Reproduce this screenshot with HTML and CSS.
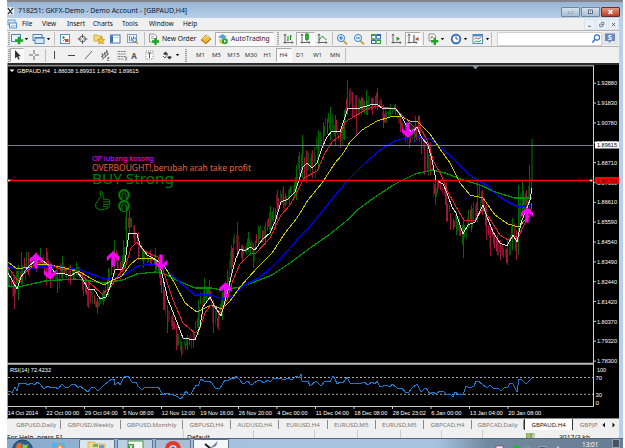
FILE: index.html
```
<!DOCTYPE html>
<html lang="en">
<head>
    <meta charset="UTF-8">
    <title>718251: GKFX-Demo - Demo Account - [GBPAUD,H4]</title>
    <link rel="stylesheet" href="styles.css">
</head>
<body>
    <svg class="defs" width="0" height="0">
        <symbol id="caret" viewBox="0 0 5 12"><path d="M.8 5h3.4L2.5 7.2z" fill="#111"/></symbol>
        <symbol id="plus" viewBox="0 0 8 8"><path d="M2.7 0h2.6v2.7H8v2.6H5.3V8H2.7V5.3H0V2.7h2.7z" fill="#19a51f"/></symbol>
        <symbol id="axes" viewBox="0 0 12 12"><path d="M3 1v9.500M1.500 9.500h9.500M1.800 2.500L3 1l1.200 1.500M9.800 8.300L11 9.500l-1.200 1.200" fill="none" stroke="#555" stroke-width=".9"/></symbol>
    </svg>

    <div class="window">
        <div class="titlebar">
            <svg class="app-icon" viewBox="0 0 8 9"><rect width="8" height="9" fill="#eef2f5"/><path d="M1 1l5 7M7 1L1 8" stroke="#222" stroke-width="1.300"/></svg>
            <span class="title">718251: GKFX-Demo - Demo Account - [GBPAUD,H4]</span>
            <div class="win-buttons">
                <span class="wb"><svg viewBox="0 0 18 10"><rect x="6" y="5" width="6" height="2" fill="#fff" stroke="#56657a" stroke-width=".6"/></svg></span>
                <span class="wb"><svg viewBox="0 0 18 10"><rect x="6.500" y="2.500" width="5" height="4.500" fill="#fff" stroke="#3d4b60"/><rect x="8.300" y="4" width="1.500" height="1.500" fill="#3d4b60"/></svg></span>
                <span class="wb close"><svg viewBox="0 0 18 10"><path d="M6.500 2.500l5 5M11.500 2.500l-5 5" stroke="#fff" stroke-width="1.700"/></svg></span>
            </div>
        </div>

        <div class="menubar">
            <svg class="menu-icon" viewBox="0 0 10 10"><rect x="1" y="1" width="7" height="5" fill="#d7e8fa" stroke="#6c9bd0"/><rect x="2.500" y="4" width="7" height="5" fill="#eef6ff" stroke="#5d90cb"/><path d="M4 8l1.500-2L7 7.500 8.500 6" stroke="#4c86c7" fill="none" stroke-width=".7"/></svg>
            <span class="m-file">File</span>
            <span class="m-view">View</span>
            <span class="m-insert">Insert</span>
            <span class="m-charts">Charts</span>
            <span class="m-tools">Tools</span>
            <span class="m-window">Window</span>
            <span class="m-help">Help</span>
            <div class="mdi-buttons">
                <svg viewBox="0 0 9 10"><path d="M3 7h3" stroke="#555"/></svg>
                <svg viewBox="0 0 9 10"><path d="M4 2.500h3v3H6M2.500 4.500h3v3h-3z" fill="none" stroke="#555" stroke-width=".8"/></svg>
                <svg viewBox="0 0 9 10"><path d="M2.700 3.300l3.600 3.600M6.300 3.300L2.700 6.900" stroke="#555"/></svg>
            </div>
        </div>

        <div class="toolbar standard">
            <i class="grip s3"></i>
            <svg class="s14" viewBox="0 0 14 12"><rect x="1.500" y="1.500" width="9" height="7" fill="#e9f3fc" stroke="#4d86bd"/><use href="#plus" x="5" y="3.500" width="8" height="8"/></svg>
            <svg class="s5"><use href="#caret"/></svg>
            <svg class="s15 ml2" viewBox="0 0 15 12"><rect x="2" y="1.500" width="9" height="6" fill="#e9f3fc" stroke="#4d86bd"/><rect x="4" y="4.500" width="9" height="6" fill="#d5e7f8" stroke="#4d86bd"/><path d="M4 5h9" stroke="#3573b3"/></svg>
            <svg class="s5"><use href="#caret"/></svg>
            <i class="sep s6"></i>
            <svg class="s16" viewBox="0 0 16 12"><rect x="3.500" y="1.500" width="9" height="9" fill="#fff" stroke="#5b92c9"/><path d="M5 4.500L6.500 3 8 4.500 6.500 6z" fill="#16a316"/><path d="M8 6h3.500v3H8z" fill="#d8452b"/><path d="M8 6L6 8" stroke="#cf6a3a"/></svg>
            <svg class="s19" viewBox="0 0 19 12"><circle cx="9.500" cy="6" r="3" fill="none" stroke="#555" stroke-width=".9"/><path d="M9.500 1v4M9.500 7v4M4.500 6h4M10.500 6h4" stroke="#555" stroke-width=".9"/></svg>
            <svg class="s14" viewBox="0 0 14 12"><path d="M2 2h3l1 1h4v5H2z" fill="#f6dc7c" stroke="#c89c2d" stroke-width=".8"/><path d="M9 4l1.200 2.200 2.500.3-1.800 1.800.4 2.600L9 9.700l-2.300 1.200.4-2.600-1.800-1.800 2.500-.3z" fill="#f3c633" stroke="#b1831b" stroke-width=".6"/></svg>
            <svg class="s19" viewBox="0 0 19 12"><rect x="4.500" y="2" width="9.500" height="8" fill="#fff" stroke="#4477b8"/><rect x="5" y="2.500" width="2" height="7" fill="#3a6cb6"/><path d="M8 4.500h5" stroke="#b9d0ea"/></svg>
            <svg class="s16" viewBox="0 0 16 12"><rect x="2.500" y="1.500" width="9" height="8" fill="#eaf3fc" stroke="#7ba1c9"/><path d="M4.500 3v5M6.500 4v4M8.500 3v4" stroke="#6389b4"/><circle cx="9.500" cy="7" r="2" fill="#dcecf8" stroke="#4b7db4"/><path d="M11 8.500l2 2.300" stroke="#c89735" stroke-width="1.400"/></svg>
            <i class="sep s7"></i>
            <svg class="s11" viewBox="0 0 11 12"><path d="M1.500 1h5L8.500 3v6h-7z" fill="#fff" stroke="#777" stroke-width=".8"/><path d="M3 3.500h3M3 5.500h4" stroke="#888" stroke-width=".7"/><use href="#plus" x="4" y="5" width="7" height="7"/></svg>
            <span class="new-order">New Order</span>
            <svg class="s18" viewBox="0 0 18 12"><path d="M4 7l5-5 5 4-5 5z" fill="#f1bd33" stroke="#a8761a" stroke-width=".8"/><path d="M4 7l5 2.500L14 6" fill="none" stroke="#a8761a" stroke-width=".7"/><path d="M6.500 5.500l3-2.500 2 1.500" stroke="#fff0ae" fill="none"/></svg>
            <div class="pressed auto">
                <svg class="s11" viewBox="0 0 11 12"><path d="M1 4l4.500-3L10 4 5.500 6z" fill="#5aa0dc"/><path d="M1.500 5.500l4 1.500 4-1.500-1.500 5h-5z" fill="#edc449"/><circle cx="7.800" cy="8.300" r="3" fill="#27a62f"/><path d="M7 6.800l2.400 1.500L7 9.800z" fill="#fff"/></svg>
                <span>AutoTrading</span>
            </div>
            <i class="grip s7"></i>
            <svg class="s15" viewBox="0 0 15 12"><use href="#axes" x="1" width="12" height="12"/><path d="M7 3v5M7 7h-1M9.500 2v5M9.500 3h1.300" stroke="#15921b"/></svg>
            <div class="pressed s19"><svg class="s15" viewBox="0 0 15 12"><use href="#axes" x="1" width="12" height="12"/><path d="M9 0v8.500" stroke="#15921b"/><rect x="7.500" y="1" width="3" height="5.500" fill="#1db526" stroke="#0d7d14" stroke-width=".6"/></svg></div>
            <svg class="s15" viewBox="0 0 15 12"><use href="#axes" x="1" width="12" height="12"/><path d="M4 7.500q3-6 5-3l2.500 2.500" stroke="#15921b" fill="none"/></svg>
            <i class="sep s4"></i>
            <svg class="s16" viewBox="0 0 16 12"><path d="M9 7.500l4 3.800" stroke="#d0a23e" stroke-width="2"/><circle cx="7" cy="5" r="3.600" fill="#d9ecfa" stroke="#4588c7"/><path d="M5.200 5h3.600M7 3.200v3.600" stroke="#256fb4"/></svg>
            <svg class="s18" viewBox="0 0 18 12"><path d="M10 7.500l4 3.800" stroke="#d0a23e" stroke-width="2"/><circle cx="8" cy="5" r="3.600" fill="#d9ecfa" stroke="#4588c7"/><path d="M6.200 5h3.600" stroke="#256fb4"/></svg>
            <svg class="s16" viewBox="0 0 16 12"><path d="M3 1h4.800v4.700H3zM8.200 6.200H13V11H8.200z" fill="#2fa332"/><path d="M8.200 1H13v4.700H8.200zM3 6.200h4.800V11H3z" fill="#2e62bd"/><path d="M4 3h3v2H4zM9 3h3v2H9zM4 8h3v2H4zM9 8h3v2H9z" fill="#eef5ff"/></svg>
            <i class="sep s5"></i>
            <svg class="s16" viewBox="0 0 16 12"><use href="#axes" x="1" width="12" height="12"/><path d="M7.500 3.500v4.600L11 5.800z" fill="#17a11e"/></svg>
            <div class="pressed s16"><svg class="s15" viewBox="0 0 15 12"><use href="#axes" x="0" width="12" height="12"/><path d="M8 2v7" stroke="#444"/><path d="M12.500 4v4L9 6z" fill="#cf3c20"/></svg></div>
            <i class="sep s5"></i>
            <svg class="s14" viewBox="0 0 14 12"><path d="M3 1h5l1.500 1.500V8H3z" fill="#fff" stroke="#777" stroke-width=".8"/><path d="M4.500 6l1.500-3 1 2" stroke="#555" fill="none" stroke-width=".7"/><use href="#plus" x="5" y="4.500" width="7.500" height="7.500"/></svg>
            <svg class="s5"><use href="#caret"/></svg>
            <svg class="s15 ml3" viewBox="0 0 15 12"><circle cx="8" cy="6" r="4.300" fill="#fff" stroke="#2466b9" stroke-width="1.700"/><path d="M8 3v3h2.300" stroke="#333" fill="none" stroke-width=".8"/></svg>
            <svg class="s5"><use href="#caret"/></svg>
            <svg class="s15 ml2" viewBox="0 0 15 12"><rect x="3" y="1.500" width="9.500" height="9" fill="#fff" stroke="#4f8bc5"/><path d="M3 2.500h9.500" stroke="#4f8bc5" stroke-width="2"/><path d="M4.500 6l2-1 1.500 1 3-1.500" stroke="#c94b33" fill="none"/><path d="M4.500 9l2-1 1.500 1 3-1.500" stroke="#24a02b" fill="none"/></svg>
            <svg class="s5"><use href="#caret"/></svg>
            <i class="bar-end"></i>
            <div class="search"><svg viewBox="0 0 10 12"><circle cx="6" cy="4.500" r="2.600" fill="#fff" stroke="#3a6fd0" stroke-width="1.100"/><path d="M4 6.500L1.300 9.500" stroke="#3a6fd0" stroke-width="1.500"/></svg></div>
            <div class="mail"><svg viewBox="0 0 12 12"><path d="M1 1.500h10V9H7l-1.500 2.300L4.500 9H1z" fill="#7186b8"/><text x="4" y="7.800" class="mail-count">5</text></svg></div>
        </div>

        <div class="toolbar studies">
            <i class="grip s3"></i>
            <div class="pressed s14"><svg class="s12" viewBox="0 0 12 12"><path d="M4 1v8.500l2-1.800 1.400 3 1.300-.6-1.400-2.900h2.600z" fill="#333"/></svg></div>
            <svg class="s19" viewBox="0 0 19 12"><path d="M10 1v4M10 7v4M5 6h4M11 6h4" stroke="#555" stroke-width=".9"/></svg>
            <i class="sep s5"></i>
            <svg class="s12" viewBox="0 0 12 12"><path d="M6.500 2v8" stroke="#444"/></svg>
            <svg class="s16" viewBox="0 0 16 12"><path d="M8 6.500h7" stroke="#444"/></svg>
            <svg class="s18" viewBox="0 0 18 12"><path d="M9 10l7-8" stroke="#555" stroke-width=".9"/></svg>
            <svg class="s18" viewBox="0 0 18 12"><path d="M7 8l7-6M8 10.500l7-6M8 4l1 5M10.500 3l1 5M12.500 1l1 5" stroke="#444" stroke-width=".8"/><text x="13" y="12" class="tiny">E</text></svg>
            <svg class="s16" viewBox="0 0 16 12"><path d="M5.500 2.500H14M5.500 5H14M5.500 7.500H14M5.500 10H12" stroke="#555" stroke-dasharray="1 .6" stroke-width=".9"/><text x="13" y="12" class="tiny">F</text></svg>
            <span class="letter">A</span>
            <svg class="s18" viewBox="0 0 18 12"><rect x="6" y="2" width="7" height="8" fill="#fff" stroke="#777" stroke-dasharray="1 1" stroke-width=".8"/><path d="M7.500 4h4M9.500 4v5" stroke="#555"/></svg>
            <svg class="s15" viewBox="0 0 15 12"><path d="M5 5l2.500-2.500L10 5 7.500 6zM9 8l2.500-1L14 8l-2.500 2.500z" fill="#333"/><path d="M5 7l2 2 3-4" stroke="#333" fill="none" stroke-width=".8"/></svg>
            <svg class="s5 ml2"><use href="#caret"/></svg>
            <i class="grip s11"></i>
            <div class="periods">
                <span>M1</span><span>M5</span><span>M15</span><span>M30</span><span>H1</span><span class="pressed">H4</span><span>D1</span><span>W1</span><span>MN</span>
            </div>
            <i class="bar-end"></i>
        </div>

        <div class="chart">
            <svg id="chart" viewBox="7 63 612 355" width="612" height="355"></svg>
        </div>

        <div class="tabs">
            <span class="t49">GBPUSD,Daily</span>
            <span class="t59">GBPUSD,Weekly</span>
            <span class="t62">GBPUSD,Monthly</span>
            <span class="t48">GBPUSD,H4</span>
            <span class="t48">AUDUSD,H4</span>
            <span class="t48">EURUSD,H4</span>
            <span class="t48">EURUSD,M5</span>
            <span class="t48">EURUSD,M5</span>
            <span class="t48">GBPCAD,H4</span>
            <span class="t52">GBPCAD,Daily</span>
            <span class="t49 active">GBPAUD,H4</span>
            <span class="cut">GBPJP</span>
            <svg class="tab-arrows" viewBox="0 0 16 8"><path d="M4 1.500v5L1.500 4zM11.500 1.500v5L14 4z" fill="#111"/></svg>
        </div>

        <div class="statusbar">
            <span class="help">For Help, press F1</span>
            <span class="profile">Default</span>
            <span class="c61"></span><span class="c43"></span><span class="c43"></span><span class="c41"></span><span class="c41"></span>
            <svg class="signal" viewBox="0 0 16 8"><path d="M1 0v8M3 0v8M5 0v8M7 0v8M9 0v8" stroke="#5f8a1c" stroke-width="1.300"/><path d="M11 0v8M13 0v8" stroke="#41611c" stroke-width="1.300" stroke-dasharray="1 1"/></svg>
            <span class="traffic">3017/3 kb</span>
        </div>

        <div class="taskbar">
            <svg class="orb" viewBox="0 0 32 10"><circle cx="15.500" cy="11" r="10" fill="#315f8c" stroke="#23415f"/><path d="M10 5q3-2 5 0l-1 4H9z" fill="#ea6a34"/><path d="M16 5q3 2 5.500 0L20 9h-5z" fill="#8fc640"/></svg>
            <svg class="ql" viewBox="0 0 40 10"><rect x="13" y="4" width="13" height="6" rx="1" fill="#56b1e6"/><circle cx="21" cy="8.500" r="3" fill="#f49a3d"/><circle cx="21" cy="8.500" r="1" fill="#fff"/></svg>
            <div class="task folder"><svg viewBox="0 0 22 9"><path d="M2 2h7l1 2h9v6H2z" fill="#f2d888" stroke="#c8a950" stroke-width=".7"/><path d="M7 4h5v3H7z" fill="#6fae7d"/><path d="M13 5h5v3h-5z" fill="#6aa0d8"/></svg></div>
            <div class="task"><svg viewBox="0 0 22 9"><rect x="4" y="1" width="15" height="9" fill="#f3faf1" stroke="#4b9446"/><path d="M4 4h6v6H4z" fill="#3f9a3d"/><path d="M5.500 5l3 4M8.500 5l-3 4" stroke="#fff"/></svg></div>
            <div class="task chrome"><svg viewBox="0 0 22 9"><circle cx="11" cy="9" r="8" fill="#dc3b2d"/><circle cx="11" cy="9" r="3.700" fill="#fff"/><circle cx="11" cy="9" r="2.700" fill="#3d7cd8"/></svg></div>
            <div class="task current"><svg viewBox="0 0 22 9"><path d="M5 4l6 5" stroke="#222" stroke-width="2"/><path d="M18 1L9 9l7-3z" fill="#6d8396"/></svg></div>
            <svg class="tray" viewBox="0 0 76 10"><rect x="1" y="7" width="7" height="3" fill="#f3e9f3" stroke="#8b3d74" stroke-width=".7"/><circle cx="21" cy="10" r="3.500" fill="#1cba36"/><path d="M30 8h4v2h-4zM44 7.500h7V10h-7z" fill="#51606d" stroke="#c7d3dd" stroke-width=".5"/><path d="M61 9l3-2v3" fill="#c7d3dd"/></svg>
            <span class="clock">13:01</span>
            <i class="show-desktop"></i>
        </div>
    </div>

    <script src="script.js"></script>
</body>
</html>
```
FILE: styles.css
```
* {
    box-sizing: border-box;
}
body {
    margin: 0;
    width: 625px;
    height: 448px;
    overflow: hidden;
    background: #fff;
    font-family: "Noto Sans", "Open Sans", sans-serif;
    font-size: 6.7px;
    color: #111;
}
svg {
    display: block;
    flex: none;
    overflow: hidden;
}
.defs {
    position: absolute;
}
.window {
    width: 616px;
    height: 448px;
    margin-left: 7px;
    display: flex;
    flex-direction: column;
    border-top: 2px solid #85848b;
    background: #b9d0ec;
    white-space: nowrap;
}
.window > div {
    flex: none;
}

/* title bar */
.titlebar {
    height: 16px;
    display: flex;
    align-items: center;
    background: linear-gradient(#98b3d2, #b7cfe8);
}
.app-icon {
    width: 7px;
    height: 8px;
    margin-top: 2px;
}
.title {
    margin: 1px 0 0 4px;
    font-size: 6.95px;
    line-height: 12px;
    color: #0b1830;
}
.win-buttons {
    display: flex;
    gap: 1px;
    margin: 3px 3px 0 auto;
}
.wb {
    width: 19px;
    height: 10px;
    border: 1px solid #73869e;
    border-radius: 1px;
    background: linear-gradient(#d6e2ef, #a8bdd4);
}
.wb svg {
    width: 17px;
    height: 8px;
}
.close {
    border-color: #6d2b2b;
    background: linear-gradient(#e19a87, #bd3a22);
}

/* menu */
.menubar {
    width: 612px;
    height: 12px;
    display: flex;
    align-items: center;
    background: #f0f0f0;
    font-size: 6.5px;
    line-height: 12px;
}
.menu-icon {
    width: 10px;
    height: 10px;
    margin-right: 5px;
}
.m-file { width: 20px; }
.m-view { width: 25px; }
.m-insert { width: 26px; }
.m-charts { width: 29px; }
.m-tools { width: 27px; }
.m-window { width: 34px; }
.mdi-buttons {
    display: flex;
    gap: 1px;
    margin-left: auto;
}
.mdi-buttons svg {
    width: 11px;
    height: 11px;
    border: 1px solid #dbe5f0;
    background: #e9f2fb;
}

/* toolbars */
.toolbar {
    width: 612px;
    display: flex;
    align-items: center;
    background: #f0f0f0;
    border-top: 1px solid #b5b5b5;
}
.toolbar svg {
    height: 12px;
}
.standard {
    height: 16px;
}
.studies {
    height: 17px;
}
.s3 { width: 3px; }
.s4 { width: 4px; }
.s5 { width: 5px; }
.s6 { width: 6px; }
.s7 { width: 7px; }
.s11 { width: 11px; }
.s12 { width: 12px; }
.s14 { width: 14px; }
.s15 { width: 15px; }
.s16 { width: 16px; }
.s18 { width: 18px; }
.s19 { width: 19px; }
.ml2 { margin-left: 2px; }
.ml3 { margin-left: 3px; }
.grip, .sep {
    flex: none;
    height: 13px;
    background: linear-gradient(#bdbdbd, #bdbdbd) center / 1px 100% no-repeat;
}
.grip {
    background: repeating-linear-gradient(#a5a5a5 0 1px, #ddd 1px 2px) center / 2px 100% no-repeat;
}
.bar-end {
    width: 2px;
    height: 14px;
    border-right: 1px solid #bdbdbd;
}
.new-order {
    width: 38px;
    padding-left: 3px;
}
.pressed {
    flex: none;
    height: 14px;
    display: flex;
    align-items: center;
    justify-content: center;
    background: #f9f9f9;
    border: 1px solid #fff;
    border-top-color: #aaa;
    border-left-color: #aaa;
}
.auto {
    width: 59px;
    justify-content: flex-start;
    padding-left: 1px;
    gap: 3px;
    color: #301040;
}
.search {
    width: 105px;
    height: 14px;
    margin-left: 5px;
    display: flex;
    align-items: center;
    justify-content: flex-end;
    background: #fff;
    border: 1px solid #d2d2d2;
}
.search svg {
    width: 10px;
}
.mail {
    width: 16px;
    height: 13px;
    display: flex;
    justify-content: center;
    background: #e1e4ea;
}
.mail svg {
    width: 12px;
}
.mail-count {
    font-size: 7px;
    font-weight: bold;
    fill: #fff;
}
.tiny {
    font-size: 4.5px;
    fill: #333;
}
.letter {
    width: 12px;
    text-align: center;
    font-size: 8px;
    font-weight: bold;
    color: #555;
}
.periods {
    display: grid;
    grid-template-columns: 16px 16px 18px 17px 16px 16px 17px 18px 17px;
    align-items: center;
    text-align: center;
    margin-left: 1.5px;
    font-size: 6px;
    color: #333;
}

/* chart */
.chart {
    width: 612px;
    height: 355px;
    background: #000;
}
.axis {
    font-family: "Liberation Sans", Arial, sans-serif;
}
.comment {
    font-family: "Noto Sans", "Open Sans", sans-serif;
}

/* chart tabs */
.tabs {
    width: 612px;
    height: 12px;
    display: flex;
    align-items: center;
    padding-left: 5px;
    background: #f0f0f0;
    border-top: 1px solid #888;
    font-size: 6.15px;
    line-height: 10px;
    color: #777;
}
.tabs span {
    text-align: center;
    border-right: 1px solid #8a8a8a;
    height: 9px;
    line-height: 9px;
}
.t48 { width: 48.2px; }
.t49 { width: 49px; }
.t52 { width: 52px; }
.t59 { width: 60px; }
.t62 { width: 62px; }
.tabs .active {
    height: 12px;
    line-height: 11px;
    background: #fff;
    border: 1px solid #333;
    border-top: 0;
    color: #111;
}
.tabs .cut {
    width: 26px;
    padding-left: 5px;
    border: 0;
}
.tab-arrows {
    width: 16px;
    height: 8px;
    margin-left: 2px;
}

/* status bar */
.statusbar {
    width: 612px;
    height: 8px;
    display: flex;
    background: #f0f0f0;
    overflow: hidden;
    line-height: 15px;
}
.statusbar span {
    height: 8px;
    border-right: 1px solid #ccc;
}
.help { width: 177px; }
.statusbar .profile {
    width: 70px;
    padding-left: 3px;
}
.c61 { width: 61px; }
.c43 { width: 43px; }
.c41 { width: 41px; }
.signal {
    width: 16px;
    height: 5px;
    margin: 3px 0 0 40px;
}
.statusbar .traffic {
    margin-left: 20px;
    border: 0;
}

/* taskbar */
.taskbar {
    height: 10px;
    display: flex;
    overflow: hidden;
    background: linear-gradient(90deg, #87a9cb, #a6c2df 240px, #a6c2df 430px, #71899f 480px, #667d92);
    border-top: 1px solid #52677e;
}
.orb {
    width: 32px;
    height: 10px;
}
.ql {
    width: 40px;
    height: 10px;
}
.task {
    width: 36px;
    height: 10px;
    margin-right: 2px;
    display: flex;
    justify-content: center;
    border: 1px solid #5b7795;
    border-bottom: 0;
    border-radius: 2px 2px 0 0;
    background: #bccfe2;
}
.task svg {
    width: 22px;
    height: 9px;
}
.folder {
    background: #dce6ef;
}
.chrome {
    background: #a9bed5;
}
.current {
    background: #f4f7fa;
}
.tray {
    width: 76px;
    height: 10px;
    margin-left: 264px;
}
.clock {
    margin-left: 11px;
    width: 30px;
    font-size: 6.4px;
    line-height: 12px;
    color: #fff;
}
.show-desktop {
    width: 8px;
    background: #43545f;
    border: 1px solid #93a4b0;
}
```
FILE: script.js
```
const svg = document.getElementById('chart');

function add(tag, attrs, text) {
    const el = document.createElementNS('http://www.w3.org/2000/svg', tag);
    for (const key in attrs) el.setAttribute(key, attrs[key]);
    if (text) el.textContent = text;
    svg.appendChild(el);
    return el;
}

function hline(x1, x2, y, color, width, dash) {
    add('line', { x1, x2, y1: y, y2: y, stroke: color, 'stroke-width': width || 1, 'stroke-dasharray': dash || 'none' });
}

function label(text, x, y, length, size, color, cls) {
    add('text', { x, y, textLength: length, lengthAdjust: 'spacingAndGlyphs', class: cls || 'axis', style: `font-size:${size}px;fill:${color || '#fff'}` }, text);
}

function curve(points, color, width) {
    add('polyline', { points, fill: 'none', stroke: color, 'stroke-width': width, 'stroke-linejoin': 'round', 'shape-rendering': 'crispEdges' });
}

// window edge and chart frame
add('rect', { x: 7, y: 63, width: 612, height: 2, fill: '#2c2c2c' });
add('rect', { x: 7, y: 63, width: 1, height: 355, fill: '#9a9a9a' });
hline(8, 594, 65.8, '#c8cccc');
add('line', { x1: 593.5, x2: 593.5, y1: 66, y2: 407, stroke: '#d0d0d0' });
add('path', { d: 'M472.500 66h6l-3 3.500z', fill: '#8195a5' });

// high/low envelope of the price: x, high y, low y
const range = [
    [8,268,285],[14,275,309],[18,265,300],[21,252,285],[28,252,275],[36,252,272],[40,248,268],[46,248,285],[50,262,288],[57,265,293],
    [62,256,280],[70,265,285],[76,262,275],[82,272,290],[88,280,308],[97,298,314],[103,290,305],[108,268,297],[114,240,275],[120,262,280],
    [123,240,272],[126,205,250],[129,210,235],[134,225,243],[138,232,260],[143,250,268],[150,250,266],[155,248,270],[160,263,285],[163,280,310],
    [167,305,333],[172,315,330],[176,325,350],[181,342,356],[187,335,350],[193,330,348],[198,300,335],[204,278,305],[209,280,300],[213,300,333],
    [218,310,330],[222,292,320],[227,270,300],[231,245,275],[237,222,258],[242,245,263],[248,232,252],[253,243,268],[258,226,245],[265,222,245],
    [270,206,235],[277,190,220],[283,186,208],[289,188,205],[296,165,200],[302,135,178],[306,150,183],[312,150,178],[318,130,170],[323,122,148],
    [330,107,140],[335,115,145],[340,130,148],[344,110,140],[347,80,115],[352,92,118],[356,95,135],[361,97,115],[366,90,115],[372,98,115],
    [377,88,110],[383,105,128],[390,104,116],[395,104,115],[400,115,132],[405,125,142],[409,130,148],[415,116,138],[419,115,142],[424,135,175],
    [430,142,175],[435,180,205],[440,180,190],[446,183,222],[450,213,230],[456,212,235],[463,220,258],[468,210,228],[471,205,232],[477,182,222],
    [482,190,215],[486,205,240],[490,225,256],[497,235,255],[500,240,260],[507,240,265],[512,218,250],[516,230,260],[518,185,255],[522,180,215],
    [526,190,212],[529,165,210],[532,139,180]
];
const colors = ['#004d00', '#006400', '#8c1230', '#5c0a1e', '#a8163a'];
let seed = 11;
function random() {
    seed = (seed * 16807) % 2147483647;
    return seed / 2147483647;
}
let k = 0;
for (let x = 8; x < 531; x += 1.3) {
    while (range[k + 1][0] < x) k++;
    const [a, b] = [range[k], range[k + 1]];
    const t = (x - a[0]) / (b[0] - a[0]);
    const high = a[1] + (b[1] - a[1]) * t;
    const low = a[2] + (b[2] - a[2]) * t;
    const size = low - high;
    const rising = b[1] + b[2] < a[1] + a[2];
    const pick = random() < 0.7 ? rising : !rising;
    const color = pick ? colors[Math.floor(random() * 2)] : colors[2 + Math.floor(random() * 3)];
    add('rect', { x: Math.round(x), y: high + random() * size * 0.45, width: 1, height: size * (0.3 + random() * 0.4), fill: color });
}
range.forEach(([x, high, low], i) => {
    const rising = i === 0 || high < range[i - 1][1];
    add('rect', { x, y: high, width: 1, height: low - high, fill: rising ? '#006a00' : '#981434' });
});
add('rect', { x: 531, y: 139, width: 2, height: 40, fill: '#003c00' });

// moving averages
curve('8,286 18,287 45,281 75,279 105,283 123,280 137,274 155,272 165,274 180,282 195,288 211,288 222,290 240,287 257,281 272,275 290,263 310,248 330,234 345,222 360,208 375,197 395,184 415,174 432,170 445,173 460,179 480,185 495,192 515,198 532,198', '#008c00', 1.3);
curve('8,266 18,270 40,267 60,267 80,270 105,279 120,277 138,266 150,264 162,266 175,278 195,295 211,295 222,299 232,296 245,285 257,279 270,269 283,256 297,240 311,225 325,208 337,193 350,178 365,163 380,150 395,141 405,138 420,137 430,139 440,147 455,160 467,173 477,180 487,185 497,195 508,202 518,207 532,205', '#0000e6', 1.4);
curve('8,262 17,269 30,267 40,264 50,265 65,268 80,272 92,279 104,285 113,280 122,276 130,265 137,259 150,258 158,261 165,267 175,284 185,303 197,312 205,308 211,305 222,309 230,301 240,287 257,268 272,253 285,233 297,218 308,200 322,183 335,163 342,155 350,142 362,130 377,121 390,117 400,116 410,121 418,122 430,134 440,149 450,163 460,183 470,195 483,198 495,215 508,224 519,227 525,220 530,215', '#c8c800', 1);
curve('8,267 18,281 25,273 38,262 52,265 60,269 75,270 88,281 102,294 110,288 120,273 125,268 131,248 137,242 143,250 150,254 158,257 163,270 173,300 183,323 195,333 200,328 205,313 211,305 221,313 227,300 233,280 240,264 250,254 256,253 270,238 281,215 290,205 297,192 304,178 317,171 325,153 332,142 340,136 345,122 355,116 367,109 377,106 395,109 405,118 414,127 420,127 427,140 434,162 442,177 447,190 456,207 464,220 475,220 483,209 490,219 500,235 508,240 515,236 518,238 524,225 530,215 532,203', '#e02424', 1);
curve('8,273 17,289 21,277 28,267 37,259 43,261 50,266 55,273 63,273 70,276 77,272 82,278 88,289 94,289 100,299 106,297 110,287 115,270 122,269 125,262 129,233 137,234 140,245 147,255 153,258 159,262 163,278 168,300 175,317 183,338 195,340 200,327 203,307 210,297 215,307 221,316 224,305 228,290 232,273 236,258 240,249 245,251 250,247 255,250 262,240 270,233 275,222 281,202 288,199 295,192 299,180 303,167 307,163 312,168 317,163 322,148 327,137 332,131 340,132 344,120 348,108 355,109 360,108 370,105 377,104 383,109 395,108 402,117 407,127 412,133 417,127 422,138 428,145 432,160 436,180 443,184 447,193 452,207 456,213 463,234 468,225 475,222 483,205 487,217 493,232 500,243 507,246 513,235 517,242 521,223 526,210 530,200 532,188', '#dcdcdc', 1);

// price levels
hline(8, 593, 145.5, '#708090');

// indicator texts and symbols
label('OP lubang kosong', 92, 161, 62, 7.8, '#ff00ff', 'comment');
label('OVERBOUGHT!,berubah arah take profit', 92, 170.7, 159, 8.4, '#f0603c', 'comment');
label('BUY Strong', 92, 184, 82, 15, '#008000', 'comment');
hline(8, 593, 180.5, '#ff0000', 1.5);
add('path', {
    d: 'M98 200.500l3-4 -1-4.500q1.500-1.500 2.500.5l.8 3.500q.2 1.500-.5 3l5.500.500q2.500 1 1 2.500 1.500 1.500 0 2.500 1 1.500-.7 2.300 0 1.700-1.800 1.800l-6.300 1.500-4.500-2.300q-1.800-4 2-7.300zM103 201.800h6M103 204.300h6M103 206.700h5',
    fill: 'none', stroke: '#008000', 'stroke-width': 1
});
[195, 206].forEach(y => {
    add('circle', { cx: 124, cy: y, r: 4.8, fill: 'none', stroke: '#008000', 'stroke-width': 2.2 });
    add('path', { d: `M122 ${y + 5}v-6q2-3 4 0v6`, fill: '#000', stroke: '#008000', 'stroke-width': 1 });
});

// signal arrows: x, y, direction
[[36, 261, 1], [50, 272, -1], [113, 259, 1], [161, 262, -1], [225.5, 290, 1], [408, 130, -1], [527, 215, 1]].forEach(([x, y, dir]) => {
    add('path', { d: 'M-1.700 7.500V-2L-6.200 2.300V-2.200L0-7.800 6.200-2.200V2.300L1.700-2V7.500z', fill: '#ff00ff', transform: `translate(${x} ${y}) scale(1 ${dir})` });
});

// price scale
const prices = ['1.92880', '1.91830', '1.90780', '1.89760', '1.88710', '1.87660', '1.86610', '1.85590', '1.84540', '1.83490', '1.82440', '1.81420', '1.80370', '1.79320', '1.78300'];
prices.forEach((price, i) => {
    const y = 83.2 + i * 19.85;
    hline(593, 596, y, '#ccc');
    label(price, 597, y + 2.1, 20, 5.9);
});
add('rect', { x: 595, y: 141.5, width: 24, height: 7, fill: '#fff' });
label('1.89615', 597, 147.2, 20, 5.9, '#000');
add('rect', { x: 595, y: 177, width: 24, height: 7, fill: '#ff0000' });
label('1.87756', 597, 182.7, 20, 5.9, '#300');
[9, 591].forEach(x => add('rect', { x: x - 1, y: 179.5, width: 2, height: 2, fill: '#fff', stroke: '#f00' }));

add('path', { d: 'M9.500 69.500h5L12 72z', fill: '#fff' });
label('GBPAUD,H4', 17, 72.800, 33, 6.2);
label('1.88038 1.89931 1.87842 1.89615', 53.500, 72.800, 85, 6.2);

// RSI window
hline(7, 594, 363.8, '#bcbcbc', 2);
label('RSI(14) 72.4232', 10, 372.300, 41, 6.2);
hline(8, 593, 377.5, '#a8a8a8', 1, '2 2');
hline(8, 593, 394.3, '#a8a8a8', 1, '2 2');
curve('8,392 10,391 12,393 15,387 17,391 19,383 22,384 25,383 28,385 31,383 35,385 37,382 40,384 44,389 48,386 51,388 55,387 58,389 62,384 65,387 68,388 71,385 75,384 78,388 80,386 84,389 88,392 91,388 94,387 98,391 102,387 105,384 108,382 112,379 114,379 115,385 118,382 120,385 124,377 128,376 131,381 133,383 136,382 138,386 142,390 145,387 148,388 152,387 155,388 158,387 160,390 163,395 166,393 170,394 173,395 176,396 181,399 186,391 188,394 191,394 196,385 198,386 201,379 204,381 209,381 212,383 215,388 220,388 225,380 228,381 232,378 234,379 236,376 239,379 243,384 248,381 250,384 253,384 258,380 261,381 264,383 268,380 270,382 274,378 280,378 284,380 288,378 292,380 296,376 299,378 301,374 302,381 305,382 308,381 310,386 316,381 321,386 325,381 330,382 333,376 335,379 337,384 340,382 343,383 347,377 350,383 352,384 356,383 360,384 364,382 368,385 372,382 375,384 377,381 380,387 386,385 390,387 392,384 396,387 398,389 402,388 405,392 408,393 412,388 417,384 421,392 424,389 426,388 430,394 433,392 436,394 440,391 444,392 447,395 450,394 453,397 455,392 458,394 463,395 466,386 470,388 474,386 476,381 478,381 482,384 487,388 490,385 494,389 498,388 501,391 504,388 508,387 510,383 513,384 517,392 519,379 522,380 526,384 529,381 532,378', '#1e78d2', 1);
hline(8, 594, 406.5, '#c8c8c8');
label('100', 597, 371.500, 9, 5.9);
label('70', 595.500, 379.800, 6.5, 5.9);
label('30', 595.500, 396.600, 6.5, 5.9);
label('0', 595.500, 405.300, 3.5, 5.9);

// time scale
const dates = ['14 Oct 2014', '22 Oct 00:00', '29 Oct 04:00', '5 Nov 08:00', '12 Nov 12:00', '19 Nov 16:00', '26 Nov 20:00', '4 Dec 00:00', '11 Dec 04:00', '18 Dec 08:00', '28 Dec 23:02', '6 Jan 00:00', '13 Jan 04:00', '20 Jan 08:00'];
dates.forEach((date, i) => {
    const x = 7.5 + i * 38.5;
    add('line', { x1: x, x2: x, y1: 407, y2: 409, stroke: '#ccc' });
    label(date, x + 0.3, 414.5, date.length * 2.75, 6.2);
});
```
